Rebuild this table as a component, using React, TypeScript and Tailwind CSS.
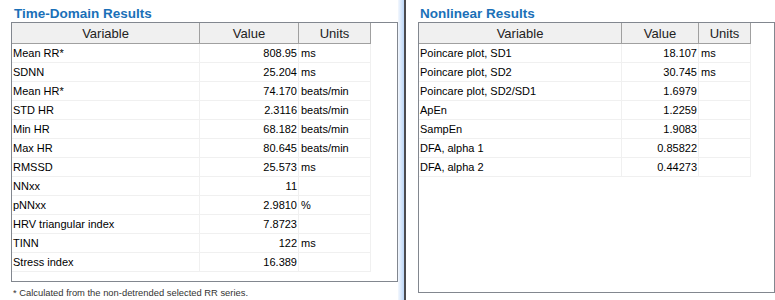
import React from "react";

type Row = [string, string, string];

const timeRows: Row[] = [
  ["Mean RR*", "808.95", "ms"],
  ["SDNN", "25.204", "ms"],
  ["Mean HR*", "74.170", "beats/min"],
  ["STD HR", "2.3116", "beats/min"],
  ["Min HR", "68.182", "beats/min"],
  ["Max HR", "80.645", "beats/min"],
  ["RMSSD", "25.573", "ms"],
  ["NNxx", "11", ""],
  ["pNNxx", "2.9810", "%"],
  ["HRV triangular index", "7.8723", ""],
  ["TINN", "122", "ms"],
  ["Stress index", "16.389", ""],
];

const nlRows: Row[] = [
  ["Poincare plot, SD1", "18.107", "ms"],
  ["Poincare plot, SD2", "30.745", "ms"],
  ["Poincare plot, SD2/SD1", "1.6979", ""],
  ["ApEn", "1.2259", ""],
  ["SampEn", "1.9083", ""],
  ["DFA, alpha 1", "0.85822", ""],
  ["DFA, alpha 2", "0.44273", ""],
];

function Table({
  rows,
  widths,
}: {
  rows: Row[];
  widths: [string, string, string];
}) {
  return (
    <div className="flex flex-col">
      <div className="flex h-[21px]">
        {["Variable", "Value", "Units"].map((h, i) => (
          <div
            key={h}
            className={`${widths[i]} h-[21px] shrink-0 bg-[#f0f0f0] border-r border-b border-[#a0a0a0] flex items-center justify-center text-[13px] text-[#222] leading-none`}
          >
            {h}
          </div>
        ))}
      </div>
      {rows.map((r, ri) => (
        <div key={ri} className="flex h-[19px]">
          <div
            className={`${widths[0]} shrink-0 border-r border-b border-[#f0f0f0] flex items-center pl-[1px] text-[11px] text-black leading-none`}
          >
            {r[0]}
          </div>
          <div
            className={`${widths[1]} shrink-0 border-r border-b border-[#f0f0f0] flex items-center justify-end pr-[1px] text-[11px] text-black leading-none`}
          >
            {r[1]}
          </div>
          <div
            className={`${widths[2]} shrink-0 border-r border-b border-[#f0f0f0] flex items-center pl-[2px] text-[11px] text-black leading-none`}
          >
            {r[2]}
          </div>
        </div>
      ))}
    </div>
  );
}

export default function App() {
  return (
    <div
      className="w-[775px] h-[300px] bg-white flex overflow-hidden"
      style={{ fontFamily: '"Liberation Sans", Arial, sans-serif' }}
    >
      {/* Left panel */}
      <div className="w-[398px] shrink-0 flex flex-col pl-[11px]">
        <div className="h-[22px] flex items-end pb-[2px] pl-[3px] text-[13.5px] font-bold text-[#1a70b8] leading-none">
          Time-Domain Results
        </div>
        <div className="w-[387px] h-[260px] border border-[#82878f] bg-white">
          <Table rows={timeRows} widths={["w-[188px]", "w-[99px]", "w-[72px]"]} />
        </div>
        <div className="pl-[2px] pt-[6px] text-[9.4px] text-[#333] leading-none">
          * Calculated from the non-detrended selected RR series.
        </div>
      </div>
      {/* Divider */}
      <div className="w-[6px] shrink-0 bg-gradient-to-r from-[#f4f8fe] to-[#bcd6f6]" />
      <div className="w-[2px] shrink-0 bg-[#4b4b4f]" />
      {/* Right panel */}
      <div className="flex-1 flex flex-col pl-[12px]">
        <div className="h-[22px] flex items-end pb-[2px] pl-[2px] text-[13.5px] font-bold text-[#1a70b8] leading-none">
          Nonlinear Results
        </div>
        <div className="w-[357px] h-[271px] border border-[#82878f] bg-white">
          <Table rows={nlRows} widths={["w-[203px]", "w-[77px]", "w-[52px]"]} />
        </div>
      </div>
    </div>
  );
}
